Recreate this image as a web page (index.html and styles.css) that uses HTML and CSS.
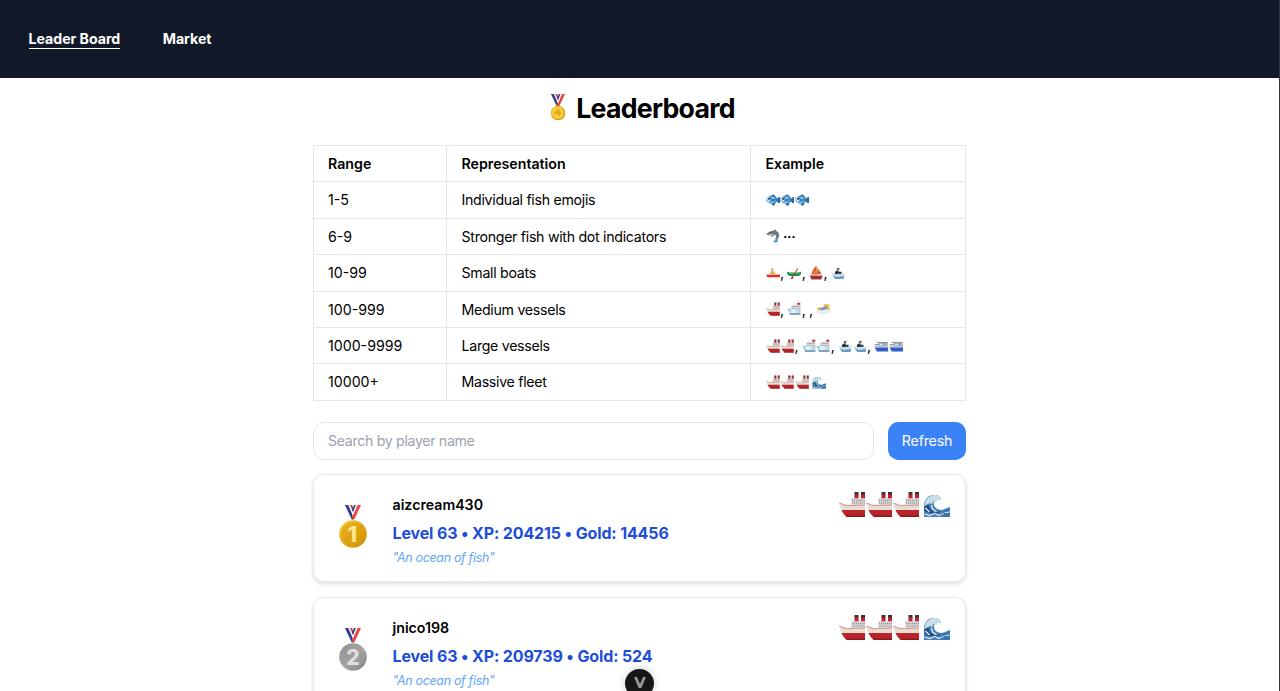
FILE: index.html
```html
<!DOCTYPE html>
<html lang="en">
<head>
<meta charset="utf-8">
<title>Leaderboard</title>
<link rel="stylesheet" href="styles.css">
</head>
<body>
<svg class="defs" aria-hidden="true">
  <defs>
    <linearGradient id="gold" x1="0" y1="0" x2="1" y2="1"><stop offset="0" stop-color="#f9cf3a"/><stop offset=".5" stop-color="#e3a917"/><stop offset="1" stop-color="#c98a06"/></linearGradient>
    <linearGradient id="silver" x1="0" y1="0" x2="1" y2="1"><stop offset="0" stop-color="#8d8d8d"/><stop offset=".55" stop-color="#aaa"/><stop offset="1" stop-color="#777"/></linearGradient>
    <linearGradient id="hull" x1="0" y1="0" x2="1" y2="0"><stop offset="0" stop-color="#75b4df"/><stop offset=".4" stop-color="#eef4f8"/><stop offset="1" stop-color="#b9c8d6"/></linearGradient>
    <symbol id="ribbon" viewBox="0 0 16 15">
      <path fill="#273b91" d="M0 0h4l6 12-3 3z"/><path fill="#f6f6fa" d="M3.200 0h2l4 9-1.200 2z"/><path fill="#d93a3c" d="M5 0h2l3 7-1 2z"/>
      <path fill="#e9463f" d="M12 0h4L9 15 6.500 12z"/><path fill="#fff" d="M10.700 0h1.900L8 10.500 7 9z"/><path fill="#273b91" d="M9 0h1.800L8 7 7 5z"/>
    </symbol>
    <symbol id="ship" viewBox="0 0 27 27">
      <path fill="#c5202b" d="M15.500 3h4v5h-4zM22 3h4v5h-4z"/><path fill="#3b3033" d="M15.500 1h4v2.500h-4zM22 1h4v2.500h-4z"/>
      <path fill="#d0d0d1" d="M12.500 7.200H26v7.300H12.500z"/><path stroke="#8f9297" stroke-dasharray="1 1" d="M13 9.500h13M13 12h13"/>
      <path fill="#e6ded5" d="M0 11.500l7 2h19V21H3.500Q1 17 0 11.500z"/><path fill="none" stroke="#d98379" stroke-width=".8" d="M.3 12l7 2.800L26 14"/>
      <path fill="#b9242a" d="M2.500 19H26v7H9q-4-1-6.500-7z"/><path fill="#8f171c" d="M6 24.500h20V26H8z"/>
    </symbol>
    <symbol id="wave" viewBox="0 0 27 27">
      <path fill="#4683b8" d="M.5 26V14C1 8 5 4 10 4c4-.5 7 1 7.500 5l-4-1-3 3c-1 5 3 8 8 8l8-3V26z"/>
      <path fill="#c6dfe6" d="M2 10C5 4 12 2 17 6l.8 4-3-2-2 3-3-1-1 3-3-1-2 4-3-1z"/>
      <path fill="#254f8c" d="M1 15l4-2c1 5 3 7 8 8l5-1-6 4-9-3-2-1z"/>
      <path fill="none" stroke="#deedf2" stroke-width="1.300" d="M1 23l5 1.500 5-2 5 2 5-3 5-1M8 14l1 4 4 3M2 17l4 4"/>
      <path fill="#3676b4" d="M20 20l6-3v9H16z"/><path stroke="#deedf2" d="M18 24l3-2 5-1"/>
    </symbol>
    <symbol id="fish" viewBox="0 0 28 24">
      <path fill="#296aa5" d="M9 4l6-3 4 5-3 3zM10 18l3 5 4-1 1-5zM19 12l6-6h2v12h-3z"/>
      <ellipse cx="11.500" cy="11.500" rx="11" ry="7.800" fill="#3a7fba"/><path fill="#8fc6e8" d="M2 14q9 4 18-2-5 7-11 7-4 0-7-5zM9 5q7 0 10 4l-8 1z"/>
      <path fill="#cbe6f3" d="M1 11q1-5 6-6l2 8-5 3z"/><circle cx="6" cy="9.500" r="2" fill="#172d46"/>
    </symbol>
    <symbol id="dolphin" viewBox="0 0 28 28">
      <path fill="#73777c" d="M0 10q5-6 14-7l5-2 1 3q6 2 6 9 0 5-6 8l-1-4q2-3 0-5l-4 1-5 4 1-5-7 1z"/>
      <path fill="#c4c9cd" d="M2 11l11-2 6 3-5-1-8 1z"/><path fill="#5195c3" d="M16 19l9 0-3 3 2 4-7 1-3-3 5-2z"/><circle cx="9" cy="8" r="1" fill="#222"/>
    </symbol>
    <symbol id="rowboat" viewBox="0 0 28 24">
      <circle cx="12" cy="5" r="2.300" fill="#d99a51"/><path fill="#efb52c" d="M10 8h4l3 6H9z"/><path stroke="#c98b52" stroke-width="1.500" d="M12 9l-6 6M13 9l6 5"/>
      <path fill="#e32d24" d="M0 15h28l-1 5H3z"/><path fill="#f3b6a1" d="M0 14h27l-1 2H2z"/>
    </symbol>
    <symbol id="canoe" viewBox="0 0 28 24">
      <path fill="#15974b" d="M0 9l5 2h17l6-2q-1 9-7 9H7Q0 18 0 9z"/><path fill="#71bc79" d="M1 10l4 2h17l5-2-3 3H5z"/><path stroke="#be4334" stroke-width="2" d="M21 3L10 21"/><ellipse cx="10" cy="21" rx="2" ry="3" transform="rotate(28 10 21)" fill="#c9302a"/>
    </symbol>
    <symbol id="sailboat" viewBox="0 0 28 28">
      <path fill="#e95032" d="M13 0q-7 8-9 17h10z"/><path fill="#f0a72b" d="M15 3q8 5 9 14h-9zM12 7L8 15h5z"/><path fill="#dc4934" d="M16 9l6 3 1 4h-7z"/><path stroke="#903c2c" stroke-width="1.300" d="M14 0v19"/>
      <path fill="#bf3031" d="M1 18h26l-3 9H4z"/><path fill="#673e43" d="M4 22h21l-1 3H5z"/><path stroke="#dfb5a5" stroke-width="1.500" d="M2 19h24"/>
    </symbol>
    <symbol id="motorboat" viewBox="0 0 28 28">
      <path fill="#292e37" d="M8 11l5-3 7 3 1 5H7z"/><path stroke="#4f555b" stroke-width="1.300" d="M12 9V5h5"/><path fill="#d9e3ea" d="M10 9l7 0 5 3h-5z"/>
      <path fill="#c8deeb" d="M0 14l8 2 19-1-2 11H8z"/><path fill="#669dbf" d="M3 19l8 3 15-2-2 6H8z"/>
    </symbol>
    <symbol id="ferry" viewBox="0 0 28 28">
      <path fill="#db3e40" d="M19 2l7-1v6h-5z"/><path fill="#d6dade" d="M8 8l5-3 13 1v9H6z"/><path stroke="#707c87" stroke-width="1.300" stroke-dasharray="2 1" d="M10 9h15M9 13h17"/>
      <path fill="url(#hull)" d="M0 13l7 1 20-1-1 13H6z"/><path fill="#7ba7c2" d="M4 22h22v4H6z"/>
    </symbol>
    <symbol id="plane" viewBox="0 0 28 24">
      <ellipse cx="13" cy="17" rx="13" ry="5" fill="#e6edf5"/><path fill="#eeb82d" d="M14 3h10l3 3-8 3zM1 11l8-3 2 4-6 2zM24 8l3 1-1 6-3-1z"/><path fill="#8998a8" d="M8 11l9-5 7 2-3 6-9 2-6-2z"/><path fill="#eef2f6" d="M4 14l8 1 9-3-2 4-10 2z"/>
    </symbol>
    <symbol id="blueboat" viewBox="0 0 28 28">
      <path fill="#8f999f" d="M5 6h22v2h-3v7H9V8H5z"/><path fill="#dbe1e5" d="M11 9h7v4h-7z"/><path stroke="#68737b" stroke-width="1.500" d="M1 11h8M26 7v7"/>
      <path fill="#b8c4d0" d="M0 13h28v4H1z"/><path fill="#315bc5" d="M1 17h27v8H5z"/>
    </symbol>
  </defs>
</svg>

<header class="navbar">
  <a class="nav-link active">Leader Board</a>
  <a class="nav-link">Market</a>
</header>

<main class="content">
  <h1 class="title">
    <svg class="title-medal" viewBox="0 0 16 28"><use href="#ribbon" x="1" width="14" height="15"/><circle cx="8" cy="20" r="7.300" fill="url(#gold)"/><circle cx="8" cy="20" r="6" fill="#f7cf42"/><path fill="#dfaa24" d="M5 18l3-2 3 1-2 2 3 1-3 3-2-2-3 1z"/></svg>
    <span>Leaderboard</span>
  </h1>

  <table class="ranges">
    <thead><tr><th class="col-range">Range</th><th class="col-rep">Representation</th><th>Example</th></tr></thead>
    <tbody>
      <tr><td>1-5</td><td class="rep">Individual fish emojis</td><td><div class="icons"><svg><use href="#fish"/></svg><svg><use href="#fish"/></svg><svg><use href="#fish"/></svg></div></td></tr>
      <tr><td>6-9</td><td class="rep">Stronger fish with dot indicators</td><td><div class="icons"><svg><use href="#dolphin"/></svg><span class="dots">···</span></div></td></tr>
      <tr><td>10-99</td><td class="rep">Small boats</td><td><div class="icons"><svg><use href="#rowboat"/></svg><i>,</i><svg><use href="#canoe"/></svg><i>,</i><svg><use href="#sailboat"/></svg><i>,</i><svg><use href="#motorboat"/></svg></div></td></tr>
      <tr><td>100-999</td><td class="rep">Medium vessels</td><td><div class="icons"><svg><use href="#ship"/></svg><i>,</i><svg><use href="#ferry"/></svg><i>,</i><i>,</i><svg><use href="#plane"/></svg></div></td></tr>
      <tr><td>1000-9999</td><td class="rep">Large vessels</td><td><div class="icons"><svg><use href="#ship"/></svg><svg><use href="#ship"/></svg><i>,</i><svg><use href="#ferry"/></svg><svg><use href="#ferry"/></svg><i>,</i><svg><use href="#motorboat"/></svg><svg><use href="#motorboat"/></svg><i>,</i><svg><use href="#blueboat"/></svg><svg><use href="#blueboat"/></svg></div></td></tr>
      <tr><td>10000+</td><td class="rep">Massive fleet</td><td><div class="icons"><svg><use href="#ship"/></svg><svg><use href="#ship"/></svg><svg><use href="#ship"/></svg><svg class="wave"><use href="#wave"/></svg></div></td></tr>
    </tbody>
  </table>

  <div class="search-row">
    <input class="search" type="text" placeholder="Search by player name">
    <button class="refresh">Refresh</button>
  </div>

  <article class="card">
    <svg class="medal" viewBox="0 0 28 43"><use href="#ribbon" x="6" width="16" height="15"/><circle cx="14" cy="29" r="13.800" fill="url(#gold)"/><circle cx="14" cy="29" r="11.500" fill="#d99b0c" opacity=".45"/><text class="medal-number gold-number" x="13.500" y="36.500">1</text></svg>
    <div class="player">
      <div class="name">aizcream430</div>
      <div class="stats">Level 63 • XP: 204215 • Gold: 14456</div>
      <div class="quote">"An ocean of fish"</div>
    </div>
    <div class="fleet"><svg><use href="#ship"/></svg><svg><use href="#ship"/></svg><svg><use href="#ship"/></svg><svg class="wave"><use href="#wave"/></svg></div>
  </article>

  <article class="card">
    <svg class="medal" viewBox="0 0 28 43"><use href="#ribbon" x="6" width="16" height="15"/><circle cx="14" cy="29" r="13.800" fill="url(#silver)"/><circle cx="14" cy="29" r="12" fill="#999" opacity=".5"/><text class="medal-number silver-number" x="14" y="36.500">2</text></svg>
    <div class="player">
      <div class="name">jnico198</div>
      <div class="stats">Level 63 • XP: 209739 • Gold: 524</div>
      <div class="quote">"An ocean of fish"</div>
    </div>
    <div class="fleet"><svg><use href="#ship"/></svg><svg><use href="#ship"/></svg><svg><use href="#ship"/></svg><svg class="wave"><use href="#wave"/></svg></div>
  </article>
</main>

<div class="scroll-button"><svg viewBox="0 0 12 11"><path d="M0 0h3L6 7l3-7h3L7.300 11H4.700z"/></svg></div>
</body>
</html>
```
FILE: styles.css
```css
* { box-sizing: border-box; }
body {
  margin: 0;
  height: 691px;
  overflow: hidden;
  position: relative;
  background: #fff;
  color: #000;
  border-right: 1px solid #35363a;
  font: 14.200px/21.300px Inter, "Liberation Sans", sans-serif;
}
.defs { position: absolute; width: 0; height: 0; }
.navbar {
  height: 78px;
  padding: 0 28.500px;
  display: flex;
  align-items: center;
  gap: 42.500px;
  background: #111827;
}
.nav-link { color: #fff; font-weight: 700; height: 20px; line-height: 20px; letter-spacing: -.04px; }
.active { border-bottom: 1px solid #fff; }
.content { width: 653.500px; margin-left: 312.500px; }
.title {
  height: 67px;
  margin: 0;
  padding: 14px 0 0 6px;
  display: flex;
  justify-content: center;
  gap: 10.500px;
  font-size: 26.700px;
  line-height: 32px;
  letter-spacing: -.74px;
}
.title-medal { width: 16px; height: 28px; margin-top: 1px; }
.ranges { width: 653.500px; height: 255.500px; border-collapse: collapse; table-layout: fixed; }
.ranges th, .ranges td {
  height: 36.400px;
  padding: 0 14.500px;
  border: 1px solid #e5e7eb;
  text-align: left;
  white-space: nowrap;
}
.ranges th { font-weight: 600; }
.ranges .rep { letter-spacing: -.3px; }
.col-range { width: 133.500px; }
.col-rep { width: 304px; }
.icons { display: flex; align-items: center; height: 21px; }
.icons svg { width: 14.500px; height: 14px; }
.icons i { width: 7.300px; font-style: normal; }
.icons .wave { margin-left: 3px; }
.dots { margin-left: 3px; font-weight: 600; letter-spacing: -.4px; }
.search-row { display: flex; gap: 14px; margin-top: 21.500px; }
.search {
  width: 561.500px;
  height: 38px;
  padding: 0 14.500px 1px;
  border: 1px solid #e5e7eb;
  border-radius: 10.700px;
  font: inherit;
  letter-spacing: -.34px;
}
.search::placeholder { color: #9ca3af; }
.refresh {
  width: 78px;
  height: 38px;
  padding: 0 0 1px;
  border: 0;
  border-radius: 10.700px;
  background: #3b82f6;
  color: #fff;
  font: inherit;
  letter-spacing: -.2px;
}
.card {
  height: 108px;
  margin-top: 14px;
  padding: 14px;
  display: flex;
  border: 1px solid #e5e7eb;
  border-radius: 10.700px;
  box-shadow: 0 2px 4px rgba(0, 0, 0, .14);
}
.card + .card { margin-top: 14.400px; }
.medal { width: 28px; height: 43px; margin: 16px 26px 0 11px; }
.medal-number { font-size: 21px; font-weight: 800; text-anchor: middle; }
.gold-number { fill: #ffe994; }
.silver-number { fill: #dedede; }
.player { flex: 1; padding-top: 5px; }
.name { font-weight: 600; line-height: 22px; }
.stats { color: #1d4ed8; font-size: 16px; font-weight: 700; line-height: 25px; margin-top: 5px; letter-spacing: -.14px; }
.quote { color: #60a5fa; font-size: 12.400px; font-style: italic; line-height: 18px; margin-top: 3px; letter-spacing: -.28px; }
.fleet { display: flex; height: 27px; margin-top: 2px; }
.fleet svg { width: 27px; height: 27px; }
.fleet .wave { width: 28px; margin-left: 3px; }
.scroll-button {
  position: absolute;
  left: 625px;
  top: 669px;
  width: 29px;
  height: 29px;
  border-radius: 50%;
  background: #171717;
  display: flex;
  justify-content: center;
  padding-top: 8px;
  box-shadow: 0 0 8px rgba(0, 0, 0, .2);
}
.scroll-button svg { width: 12px; height: 11px; fill: #999; }
```
